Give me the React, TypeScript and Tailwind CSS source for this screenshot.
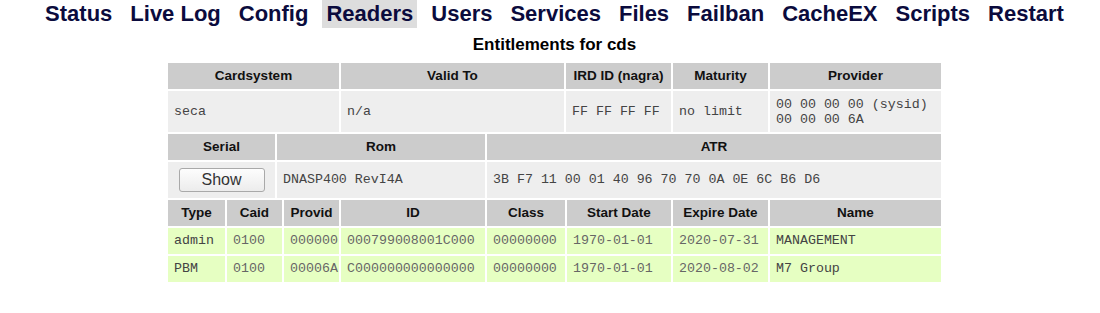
const menu = ['Status', 'Live Log', 'Config', 'Readers', 'Users', 'Services', 'Files', 'Failban', 'CacheEX', 'Scripts', 'Restart'];

const entitlements = [
    { type: 'admin', caid: '0100', provid: '000000', id: '000799008001C000', cls: '00000000', start: '1970-01-01', expire: '2020-07-31', name: 'MANAGEMENT' },
    { type: 'PBM', caid: '0100', provid: '00006A', id: 'C000000000000000', cls: '00000000', start: '1970-01-01', expire: '2020-08-02', name: 'M7 Group' },
];

const th = 'bg-[#cccccc] flex items-center justify-center font-bold text-[13.5px] text-[#111]';
const td = 'flex items-center pl-[6px] font-["Liberation_Mono","Courier_New",monospace] text-[13.3px] text-[#444] whitespace-nowrap';

export default function App() {
    return (
        <div className="w-[1100px] h-[313px] bg-white pl-[9px] font-['Liberation_Sans',Arial,sans-serif]">
            <nav className="flex justify-center gap-[10px]">
                {menu.map((item) => (
                    <a
                        key={item}
                        className={`h-7 px-1 leading-[28px] text-[22px] font-bold text-[#0b0b3d] ${item === 'Readers' ? 'bg-[#dddddd]' : ''}`}
                    >
                        {item}
                    </a>
                ))}
            </nav>
            <h2 className="mt-[7px] text-center text-[17px] font-bold text-black leading-[20px]">Entitlements for cds</h2>
            <div className="mx-auto mt-[8px] w-[773px] flex flex-col gap-[2px]">
                <div className="grid grid-cols-[171px_223px_105px_95px_1fr] gap-[2px] h-[26px]">
                    <div className={th}>Cardsystem</div>
                    <div className={th}>Valid To</div>
                    <div className={th}>IRD ID (nagra)</div>
                    <div className={th}>Maturity</div>
                    <div className={th}>Provider</div>
                </div>
                <div className="grid grid-cols-[171px_223px_105px_95px_1fr] gap-[2px] h-[41px] bg-white">
                    <div className={`${td} bg-[#eeeeee]`}>seca</div>
                    <div className={`${td} bg-[#eeeeee]`}>n/a</div>
                    <div className={`${td} bg-[#eeeeee]`}>FF FF FF FF</div>
                    <div className={`${td} bg-[#eeeeee]`}>no limit</div>
                    <div className={`${td} bg-[#eeeeee] leading-[15px]`}>
                        <div>
                            <div>00 00 00 00 (sysid)</div>
                            <div>00 00 00 6A</div>
                        </div>
                    </div>
                </div>
                <div className="grid grid-cols-[107px_208px_1fr] gap-[2px] h-[26px]">
                    <div className={th}>Serial</div>
                    <div className={th}>Rom</div>
                    <div className={th}>ATR</div>
                </div>
                <div className="grid grid-cols-[107px_208px_1fr] gap-[2px] h-[36px]">
                    <div className="bg-[#eeeeee] flex items-center justify-center">
                        <button className="w-[86px] h-[24px] rounded-[3px] border border-[#a9a9a9] bg-gradient-to-b from-[#fdfdfd] to-[#ececec] text-[16px] text-[#333] leading-none">
                            Show
                        </button>
                    </div>
                    <div className={`${td} bg-[#eeeeee]`}>DNASP400 RevI4A</div>
                    <div className={`${td} bg-[#eeeeee]`}>3B F7 11 00 01 40 96 70 70 0A 0E 6C B6 D6</div>
                </div>
                <div className="grid grid-cols-[57px_55px_55px_144px_78px_104px_95px_1fr] gap-[2px] h-[26px]">
                    <div className={th}>Type</div>
                    <div className={th}>Caid</div>
                    <div className={th}>Provid</div>
                    <div className={th}>ID</div>
                    <div className={th}>Class</div>
                    <div className={th}>Start Date</div>
                    <div className={th}>Expire Date</div>
                    <div className={th}>Name</div>
                </div>
                {entitlements.map((e) => (
                    <div key={e.type} className="grid grid-cols-[57px_55px_55px_144px_78px_104px_95px_1fr] gap-[2px] h-[26px]">
                        <div className={`${td} bg-[#e6ffc2]`}>{e.type}</div>
                        <div className={`${td} bg-[#e6ffc2] text-[#666]`}>{e.caid}</div>
                        <div className={`${td} bg-[#e6ffc2] text-[#666]`}>{e.provid}</div>
                        <div className={`${td} bg-[#e6ffc2] text-[#666]`}>{e.id}</div>
                        <div className={`${td} bg-[#e6ffc2] text-[#666]`}>{e.cls}</div>
                        <div className={`${td} bg-[#e6ffc2] text-[#666]`}>{e.start}</div>
                        <div className={`${td} bg-[#e6ffc2] text-[#666]`}>{e.expire}</div>
                        <div className={`${td} bg-[#e6ffc2]`}>{e.name}</div>
                    </div>
                ))}
            </div>
        </div>
    );
}
